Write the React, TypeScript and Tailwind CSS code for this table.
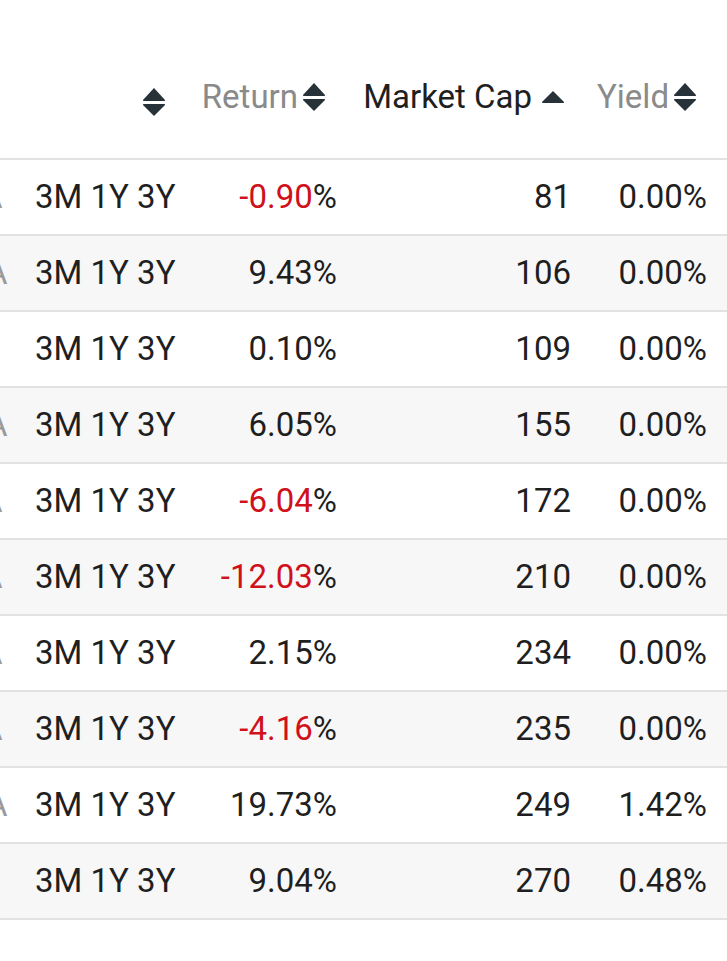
import React from 'react';

type Row = { clip: 'full' | 'sliver' | 'none'; ret: number; cap: number; yld: string };

const ROWS: Row[] = [
  { clip: 'sliver', ret: -0.9, cap: 81, yld: '0.00%' },
  { clip: 'full', ret: 9.43, cap: 106, yld: '0.00%' },
  { clip: 'none', ret: 0.1, cap: 109, yld: '0.00%' },
  { clip: 'full', ret: 6.05, cap: 155, yld: '0.00%' },
  { clip: 'sliver', ret: -6.04, cap: 172, yld: '0.00%' },
  { clip: 'sliver', ret: -12.03, cap: 210, yld: '0.00%' },
  { clip: 'sliver', ret: 2.15, cap: 234, yld: '0.00%' },
  { clip: 'sliver', ret: -4.16, cap: 235, yld: '0.00%' },
  { clip: 'full', ret: 19.73, cap: 249, yld: '1.42%' },
  { clip: 'none', ret: 9.04, cap: 270, yld: '0.48%' },
];

function SortIcon() {
  return (
    <svg width="24" height="30" viewBox="0 0 24 30" className="shrink-0">
      <path d="M12 1 L23 13 Q23.5 14 22 14 L2 14 Q0.5 14 1 13 Z" fill="#263238" />
      <path d="M2 17 L22 17 Q23.5 17 23 18 L12 29 L1 18 Q0.5 17 2 17 Z" fill="#263238" />
    </svg>
  );
}

function UpIcon() {
  return (
    <svg width="24" height="14" viewBox="0 0 24 14" className="shrink-0">
      <path d="M12 1 L23 12 Q23.5 13 22 13 L2 13 Q0.5 13 1 12 Z" fill="#263238" />
    </svg>
  );
}

export default function App() {
  return (
    <div className="w-[727px] h-[961px] bg-white overflow-hidden font-['Roboto',sans-serif] text-[33px] text-[#1f1f1f]">
      {/* header */}
      <div className="flex h-[160px] items-end pb-[41px] leading-[40px] border-b-2 border-[#e2e2e2]">
        <div className="w-[20px] shrink-0" />
        <div className="w-[170px] shrink-0 flex justify-end items-center pr-[24px]">
          <SortIcon />
        </div>
        <div className="w-[160px] shrink-0 flex justify-end items-center gap-[4px] pr-[24px] text-[#8a8a8a]">
          <span>Return</span>
          <SortIcon />
        </div>
        <div className="w-[234px] shrink-0 flex justify-end items-center gap-[9px] pr-[19px]">
          <span>Market Cap</span>
          <UpIcon />
        </div>
        <div className="w-[143px] shrink-0 flex justify-end items-center gap-[4px] pr-[30px] text-[#8a8a8a]">
          <span>Yield</span>
          <SortIcon />
        </div>
      </div>

      {/* rows */}
      {ROWS.map((r, i) => (
        <div
          key={i}
          className={`flex h-[76px] items-center leading-[40px] border-b-2 border-[#e2e2e2] ${i % 2 === 1 ? 'bg-[#f7f7f7]' : 'bg-white'}`}
        >
          <div className="w-[20px] shrink-0 overflow-hidden flex justify-start">
            {r.clip !== 'none' && (
              <span className={`text-[#9a9a9a] shrink-0 ${r.clip === 'full' ? 'ml-[-14px]' : 'ml-[-19px]'}`}>A</span>
            )}
          </div>
          <div className="w-[170px] shrink-0 pl-[15px] whitespace-nowrap">3M 1Y 3Y</div>
          <div className="w-[160px] shrink-0 text-right pr-[13px] whitespace-nowrap">
            <span className={r.ret < 0 ? 'text-[#d0101b]' : ''}>{r.ret.toFixed(2)}</span>%
          </div>
          <div className="w-[234px] shrink-0 text-right pr-[13px]">{r.cap}</div>
          <div className="w-[143px] shrink-0 text-right pr-[20px]">{r.yld}</div>
        </div>
      ))}
    </div>
  );
}
